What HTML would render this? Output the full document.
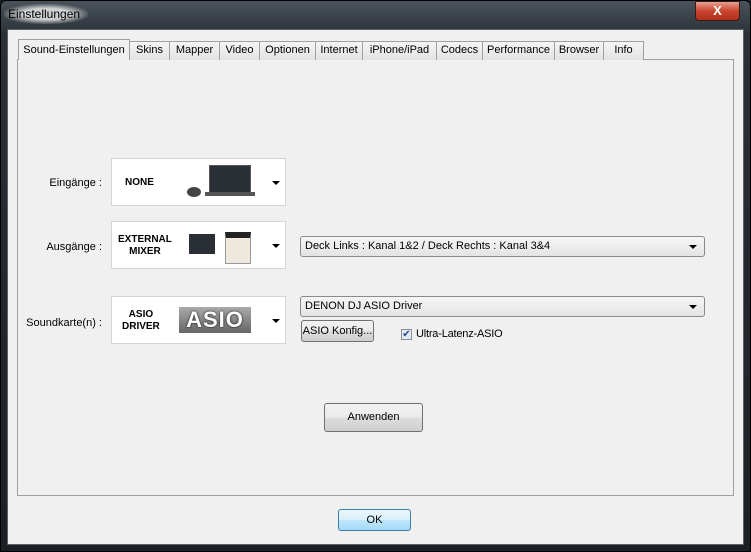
<!DOCTYPE html>
<html><head><style>
*{margin:0;padding:0;box-sizing:border-box}
body{width:751px;height:552px;overflow:hidden;background:#1a1f24;font-family:"Liberation Sans",sans-serif;font-size:11px;color:#000;position:relative}
.frame{position:absolute;left:0;top:0;width:751px;height:552px;background:linear-gradient(180deg,#4a535b 0%,#2a3036 6%,#1b2025 100%);border:1px solid #000;border-radius:6px 6px 0 0}
.title{position:absolute;left:4px;top:4px;padding:3px 8px 3px 4px;color:#000;font-size:12px;background:radial-gradient(ellipse at center,rgba(255,255,255,.75) 40%,rgba(255,255,255,0) 75%)}
.close{position:absolute;left:695px;top:1px;width:45px;height:20px;background:linear-gradient(#e8a090,#c8452e 50%,#b0301c);border:1px solid #3a1a14;border-radius:0 0 4px 4px;color:#fff;text-align:center;font-weight:bold;font-size:13px;line-height:18px}
.client{position:absolute;left:7px;top:29px;width:737px;height:516px;background:#f0f0f0;border:1px solid #5a6068}
.panel{position:absolute;left:17px;top:59px;width:717px;height:437px;border:1px solid #a0a0a0;background:#f0f0f0}
.tab{position:absolute;top:41px;height:19px;border:1px solid #a0a0a0;border-bottom:none;background:linear-gradient(#f5f5f5,#e2e2e2);text-align:center;line-height:17px;font-size:11px}
.tab.sel{top:39px;height:21px;background:#f0f0f0;z-index:2;line-height:20px}
.lbl{position:absolute;font-size:11px;text-align:right;width:90px}
.imgbox{position:absolute;left:111px;width:175px;height:48px;background:#fff;border:1px solid #d5d5d5}
.imgbox b{position:absolute;font-family:"Liberation Sans",sans-serif;font-size:10px;font-weight:bold;text-align:center;line-height:12px}
.arr{position:absolute;right:5px;top:22px;width:0;height:0;border-left:4px solid transparent;border-right:4px solid transparent;border-top:4px solid #000}
.combo{position:absolute;left:300px;width:405px;height:21px;border:1px solid #8a8a8a;border-radius:3px;background:linear-gradient(#f6f6f6,#e4e4e4);padding-left:4px;line-height:19px}
.combo .arr{top:8px;right:7px}
.btn{position:absolute;border:1px solid #707070;border-radius:3px;background:linear-gradient(#f2f2f2 0%,#ebebeb 50%,#dddddd 51%,#cfcfcf 100%);text-align:center}
</style></head><body>
<div class="frame"></div>
<div class="title">Einstellungen</div>
<div class="close">X</div>
<div class="client"></div>
<div class="panel"></div>
<div class="tab sel" style="left:18px;width:112px">Sound-Einstellungen</div>
<div class="tab" style="left:129px;width:41px">Skins</div>
<div class="tab" style="left:169px;width:51px">Mapper</div>
<div class="tab" style="left:219px;width:41px">Video</div>
<div class="tab" style="left:259px;width:57px">Optionen</div>
<div class="tab" style="left:315px;width:48px">Internet</div>
<div class="tab" style="left:362px;width:75px">iPhone/iPad</div>
<div class="tab" style="left:436px;width:47px">Codecs</div>
<div class="tab" style="left:482px;width:73px">Performance</div>
<div class="tab" style="left:554px;width:50px">Browser</div>
<div class="tab" style="left:603px;width:41px">Info</div>

<div class="lbl" style="left:12px;top:177px">Eingänge :</div>
<div class="lbl" style="left:12px;top:241px">Ausgänge :</div>
<div class="lbl" style="left:12px;top:317px">Soundkarte(n) :</div>

<div class="imgbox" style="top:158px">
<b style="left:13px;top:18px">NONE</b>
<div style="position:absolute;left:97px;top:6px;width:42px;height:28px;background:#2a2e35;border:1px solid #555"></div>
<div style="position:absolute;left:93px;top:33px;width:50px;height:4px;background:#555"></div>
<div style="position:absolute;left:75px;top:28px;width:14px;height:10px;background:#444;border-radius:50%"></div>
<div class="arr"></div></div>
<div class="imgbox" style="top:221px">
<b style="left:6px;top:12px">EXTERNAL<br>MIXER</b>
<div style="position:absolute;left:77px;top:12px;width:26px;height:20px;background:#2a2e35"></div>
<div style="position:absolute;left:113px;top:10px;width:26px;height:32px;background:#eee9dc;border:1px solid #999;border-top:6px solid #222"></div>
<div class="arr"></div></div>
<div class="imgbox" style="top:296px">
<b style="left:10px;top:12px">ASIO<br>DRIVER</b>
<div style="position:absolute;left:67px;top:10px;width:72px;height:26px;background:linear-gradient(#aaa,#666);color:#fff;font:bold 22px/26px 'Liberation Sans',sans-serif;text-align:center;letter-spacing:1px;text-shadow:0 0 2px #000">ASIO</div>
<div class="arr"></div></div>

<div class="combo" style="top:236px">Deck Links : Kanal 1&amp;2 / Deck Rechts : Kanal 3&amp;4<div class="arr"></div></div>
<div class="combo" style="top:296px">DENON DJ ASIO Driver<div class="arr"></div></div>
<div class="btn" style="left:301px;top:320px;width:73px;height:22px;line-height:20px;font-size:11px">ASIO Konfig...</div>
<div style="position:absolute;left:401px;top:329px;width:11px;height:11px;border:1px solid #8e8f8f;background:#dfe8f5;font-size:10px;line-height:9px;text-align:center;color:#2a4a8a">✔</div>
<div style="position:absolute;left:416px;top:328px;letter-spacing:-0.2px">Ultra-Latenz-ASIO</div>
<div class="btn" style="left:324px;top:403px;width:99px;height:29px;line-height:27px">Anwenden</div>
<div class="btn" style="left:338px;top:509px;width:73px;height:22px;line-height:20px;border-color:#3c7fb1;background:linear-gradient(#eaf6fd,#d9f0fc 50%,#bee6fd 51%,#a7d9f5)">OK</div>
</body></html>
